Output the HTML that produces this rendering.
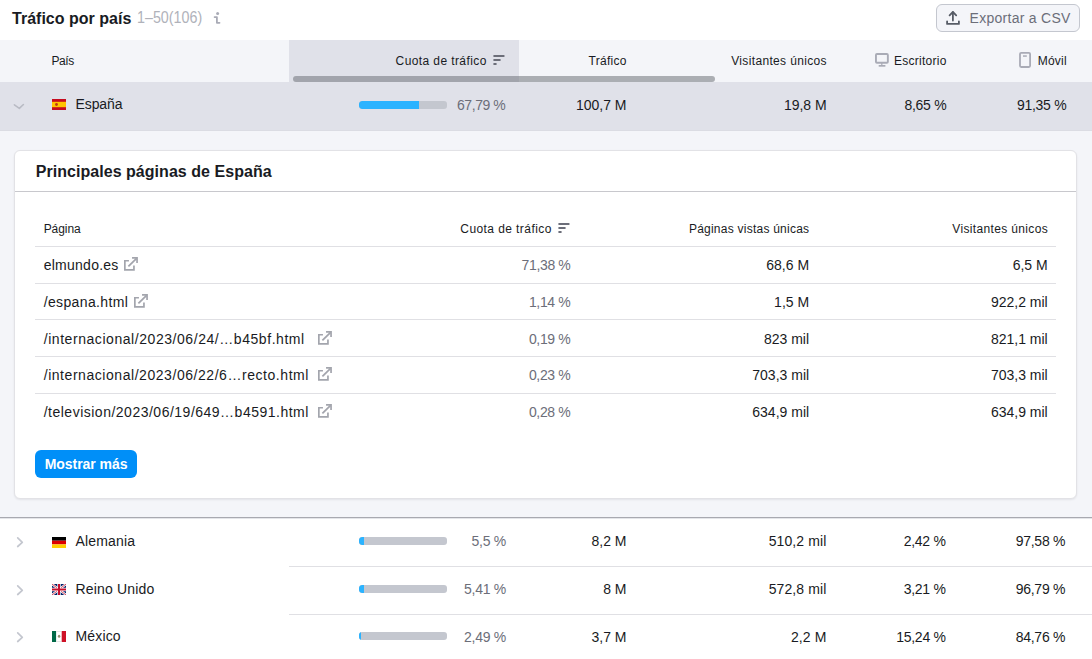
<!DOCTYPE html>
<html><head><meta charset="utf-8"><style>
html,body{margin:0;padding:0;}
body{width:1092px;height:659px;overflow:hidden;position:relative;background:#fff;font-family:"Liberation Sans",sans-serif;}
.t{position:absolute;white-space:nowrap;}
.box{position:absolute;}
.ic{position:absolute;display:block;}
</style></head><body>
<div class="t" style="left:12.00px;top:10.75px;font-size:16px;line-height:16px;letter-spacing:0.017px;color:#191b23;font-weight:700;">Tráfico por país</div>
<div class="t" style="left:136.60px;top:10.25px;font-size:16px;line-height:16px;letter-spacing:0.000px;color:#b0b2ba;-webkit-text-stroke:0;transform:scaleX(0.894);transform-origin:0.00px 0;">1–50(106)</div>
<svg class="ic" style="left:210px;top:8px" width="14" height="20" viewBox="210 8 14 20" fill="none" stroke="#a9abb6" stroke-width="1.8" stroke-linecap="round" stroke-linejoin="round"><circle cx="217.6" cy="13.4" r="1.5" fill="#a9abb6" stroke="none"/><path d="M214.6 17.1H216.9V22.8H219.5"/></svg>
<div class="box" style="left:936px;top:4px;width:142px;height:26px;border:1px solid #c4c7cf;background:#f4f5f9;border-radius:6px"></div>
<svg class="ic" style="left:945px;top:10px" width="16" height="16" viewBox="0 0 16 16" fill="none" stroke="#575c66" stroke-width="1.8" stroke-linecap="round" stroke-linejoin="round"><path d="M2.1 11.3V13.9H13.9V11.3"/><path d="M7.9 10.5V2.1"/><path d="M4.6 5.3L7.9 2.0L11.2 5.3"/></svg>
<div class="t" style="left:969.60px;top:10.95px;font-size:14px;line-height:14px;letter-spacing:0.273px;color:#6c6e79;">Exportar a CSV</div>
<div class="box" style="left:0;top:40px;width:1092px;height:42px;background:#f4f5f9"></div>
<div class="box" style="left:289px;top:40px;width:230px;height:42px;background:#e0e1e9"></div>
<div class="box" style="left:293px;top:76px;width:422px;height:6px;border-radius:3px;background:rgba(112,114,122,0.55)"></div>
<div class="t" style="left:51.50px;top:54.74px;font-size:12px;line-height:12px;letter-spacing:-0.433px;color:#191b23;">País</div>
<div class="t" style="left:395.60px;top:54.74px;font-size:12px;line-height:12px;letter-spacing:0.400px;color:#191b23;">Cuota de tráfico</div>
<svg class="ic" style="left:492px;top:54px" width="14" height="12" viewBox="0 0 14 12" fill="none" stroke="#6c6e79" stroke-width="2" stroke-linecap="round"><path d="M2.2 2H11.7"/><path d="M2.2 6H7.8"/><path d="M2.2 10H3.8"/></svg>
<div class="t" style="left:588.50px;top:54.74px;font-size:12px;line-height:12px;letter-spacing:0.292px;color:#191b23;">Tráfico</div>
<div class="t" style="left:731.20px;top:54.74px;font-size:12px;line-height:12px;letter-spacing:0.347px;color:#191b23;">Visitantes únicos</div>
<svg class="ic" style="left:874px;top:52px" width="16" height="16" viewBox="0 0 16 16" fill="none" stroke="#a9abb6" stroke-width="1.9"><rect x="1.95" y="1.95" width="11.9" height="8.8" rx="1"/><path d="M7.8 11V13" stroke-width="1.2"/><path d="M4.7 13.85H11.4" stroke-width="1.7"/></svg>
<div class="t" style="left:893.90px;top:54.74px;font-size:12px;line-height:12px;letter-spacing:0.267px;color:#191b23;">Escritorio</div>
<svg class="ic" style="left:1017px;top:51px" width="16" height="18" viewBox="0 0 16 18" fill="none" stroke="#a9abb6" stroke-width="1.8"><rect x="3" y="1.9" width="10.1" height="14.1" rx="1.2"/><path d="M6 5.05H9.8" stroke-width="1.5"/></svg>
<div class="t" style="left:1037.70px;top:54.74px;font-size:12px;line-height:12px;letter-spacing:0.225px;color:#191b23;">Móvil</div>
<div class="box" style="left:0;top:82px;width:1092px;height:48px;background:#e0e1e9;border-bottom:1px solid #dbdce3"></div>
<svg class="ic" style="left:11px;top:99px" width="16" height="14" viewBox="0 0 16 14" fill="none" stroke="#b9bbc4" stroke-width="1.6" stroke-linecap="round" stroke-linejoin="round"><path d="M3.4 5.8L8.35 9.3L12.4 5.5"/></svg>
<svg class="ic" style="left:52px;top:99px" width="14" height="11" viewBox="0 0 14 11"><rect width="14" height="11" fill="#c60b1e"/><rect y="2.8" width="14" height="5.4" fill="#ffc400"/><circle cx="4.5" cy="5.5" r="1.4" fill="#ad1519" opacity="0.8"/></svg>
<div class="t" style="left:75.50px;top:97.35px;font-size:14px;line-height:14px;letter-spacing:-0.100px;color:#191b23;">España</div>
<div class="box" style="left:359px;top:101px;width:88px;height:8px;border-radius:3px;background:#c4c7cf;overflow:hidden"><div style="position:absolute;left:0;top:0;height:8px;width:59.66px;background:#2bb3ff;border-radius:3px 0 0 3px"></div></div>
<div class="t" style="left:457.00px;top:98.15px;font-size:14px;line-height:14px;letter-spacing:-0.425px;color:#6c6e79;">67,79 %</div>
<div class="t" style="left:576.00px;top:98.15px;font-size:14px;line-height:14px;letter-spacing:-0.017px;color:#191b23;">100,7 M</div>
<div class="t" style="left:784.00px;top:98.15px;font-size:14px;line-height:14px;letter-spacing:-0.040px;color:#191b23;">19,8 M</div>
<div class="t" style="left:904.50px;top:98.15px;font-size:14px;line-height:14px;letter-spacing:-0.300px;color:#191b23;">8,65 %</div>
<div class="t" style="left:1017.05px;top:98.15px;font-size:14px;line-height:14px;letter-spacing:-0.300px;color:#191b23;">91,35 %</div>
<div class="box" style="left:0;top:131px;width:1092px;height:386px;background:#f4f5f9;border-bottom:1px solid #a8a9b0;box-shadow:0 1px 0 #e4e5e9"></div>
<div class="box" style="left:14px;top:150px;width:1061px;height:346.5px;background:#fff;border:1px solid #e2e2e6;border-radius:6px;box-shadow:0 1px 2px rgba(25,27,35,0.08)"></div>
<div class="box" style="left:15px;top:191px;width:1061px;height:1px;background:#c8c8cd"></div>
<div class="t" style="left:35.80px;top:164.25px;font-size:16px;line-height:16px;letter-spacing:0.037px;color:#191b23;font-weight:700;">Principales páginas de España</div>
<div class="t" style="left:43.70px;top:223.04px;font-size:12px;line-height:12px;letter-spacing:-0.080px;color:#191b23;">Página</div>
<div class="t" style="left:460.30px;top:223.04px;font-size:12px;line-height:12px;letter-spacing:0.420px;color:#191b23;">Cuota de tráfico</div>
<svg class="ic" style="left:557px;top:222px" width="14" height="12" viewBox="0 0 14 12" fill="none" stroke="#6c6e79" stroke-width="2" stroke-linecap="round"><path d="M2.2 2H11.7"/><path d="M2.2 6H7.8"/><path d="M2.2 10H3.8"/></svg>
<div class="t" style="left:688.90px;top:223.04px;font-size:12px;line-height:12px;letter-spacing:0.240px;color:#191b23;">Páginas vistas únicas</div>
<div class="t" style="left:952.30px;top:223.04px;font-size:12px;line-height:12px;letter-spacing:0.347px;color:#191b23;">Visitantes únicos</div>
<div class="box" style="left:35px;top:246px;width:1021px;height:1px;background:#e0e0e4"></div>
<div class="box" style="left:35px;top:283px;width:1021px;height:1px;background:#e0e0e4"></div>
<div class="box" style="left:35px;top:319px;width:1021px;height:1px;background:#e0e0e4"></div>
<div class="box" style="left:35px;top:356px;width:1021px;height:1px;background:#e0e0e4"></div>
<div class="box" style="left:35px;top:393px;width:1021px;height:1px;background:#e0e0e4"></div>
<div class="t" style="left:43.70px;top:258.15px;font-size:14px;line-height:14px;letter-spacing:0.256px;color:#191b23;">elmundo.es</div>
<svg class="ic" style="left:124px;top:257.0px" width="14" height="14" viewBox="0 0 14 14" fill="none" stroke="#a3a5ad" stroke-width="1.7" stroke-linecap="square"><path d="M4.1 3.75H0.85V12.85H9.95V9.4"/><path d="M8.9 0.85H13.05V5.1"/><path d="M12.6 1.4L4.4 9.4" stroke-width="1.8" stroke-linecap="butt"/></svg>
<div class="t" style="left:521.55px;top:258.15px;font-size:14px;line-height:14px;letter-spacing:-0.350px;color:#6c6e79;">71,38 %</div>
<div class="t" style="left:766.30px;top:258.15px;font-size:14px;line-height:14px;letter-spacing:0.000px;color:#191b23;">68,6 M</div>
<div class="t" style="left:1012.70px;top:258.15px;font-size:14px;line-height:14px;letter-spacing:0.000px;color:#191b23;">6,5 M</div>
<div class="t" style="left:43.70px;top:295.15px;font-size:14px;line-height:14px;letter-spacing:0.368px;color:#191b23;">/espana.html</div>
<svg class="ic" style="left:134px;top:294.0px" width="14" height="14" viewBox="0 0 14 14" fill="none" stroke="#a3a5ad" stroke-width="1.7" stroke-linecap="square"><path d="M4.1 3.75H0.85V12.85H9.95V9.4"/><path d="M8.9 0.85H13.05V5.1"/><path d="M12.6 1.4L4.4 9.4" stroke-width="1.8" stroke-linecap="butt"/></svg>
<div class="t" style="left:528.95px;top:295.15px;font-size:14px;line-height:14px;letter-spacing:-0.350px;color:#6c6e79;">1,14 %</div>
<div class="t" style="left:774.10px;top:295.15px;font-size:14px;line-height:14px;letter-spacing:0.000px;color:#191b23;">1,5 M</div>
<div class="t" style="left:990.90px;top:295.15px;font-size:14px;line-height:14px;letter-spacing:0.000px;color:#191b23;">922,2 mil</div>
<div class="t" style="left:43.70px;top:331.65px;font-size:14px;line-height:14px;letter-spacing:0.556px;color:#191b23;">/internacional/2023/06/24/…b45bf.html</div>
<svg class="ic" style="left:318px;top:330.5px" width="14" height="14" viewBox="0 0 14 14" fill="none" stroke="#a3a5ad" stroke-width="1.7" stroke-linecap="square"><path d="M4.1 3.75H0.85V12.85H9.95V9.4"/><path d="M8.9 0.85H13.05V5.1"/><path d="M12.6 1.4L4.4 9.4" stroke-width="1.8" stroke-linecap="butt"/></svg>
<div class="t" style="left:528.95px;top:331.65px;font-size:14px;line-height:14px;letter-spacing:-0.350px;color:#6c6e79;">0,19 %</div>
<div class="t" style="left:763.95px;top:331.65px;font-size:14px;line-height:14px;letter-spacing:0.000px;color:#191b23;">823 mil</div>
<div class="t" style="left:990.90px;top:331.65px;font-size:14px;line-height:14px;letter-spacing:0.000px;color:#191b23;">821,1 mil</div>
<div class="t" style="left:43.70px;top:368.35px;font-size:14px;line-height:14px;letter-spacing:0.550px;color:#191b23;">/internacional/2023/06/22/6…recto.html</div>
<svg class="ic" style="left:318px;top:367.2px" width="14" height="14" viewBox="0 0 14 14" fill="none" stroke="#a3a5ad" stroke-width="1.7" stroke-linecap="square"><path d="M4.1 3.75H0.85V12.85H9.95V9.4"/><path d="M8.9 0.85H13.05V5.1"/><path d="M12.6 1.4L4.4 9.4" stroke-width="1.8" stroke-linecap="butt"/></svg>
<div class="t" style="left:528.95px;top:368.35px;font-size:14px;line-height:14px;letter-spacing:-0.350px;color:#6c6e79;">0,23 %</div>
<div class="t" style="left:752.30px;top:368.35px;font-size:14px;line-height:14px;letter-spacing:0.000px;color:#191b23;">703,3 mil</div>
<div class="t" style="left:990.90px;top:368.35px;font-size:14px;line-height:14px;letter-spacing:0.000px;color:#191b23;">703,3 mil</div>
<div class="t" style="left:43.70px;top:405.15px;font-size:14px;line-height:14px;letter-spacing:0.499px;color:#191b23;">/television/2023/06/19/649…b4591.html</div>
<svg class="ic" style="left:318px;top:404.0px" width="14" height="14" viewBox="0 0 14 14" fill="none" stroke="#a3a5ad" stroke-width="1.7" stroke-linecap="square"><path d="M4.1 3.75H0.85V12.85H9.95V9.4"/><path d="M8.9 0.85H13.05V5.1"/><path d="M12.6 1.4L4.4 9.4" stroke-width="1.8" stroke-linecap="butt"/></svg>
<div class="t" style="left:528.95px;top:405.15px;font-size:14px;line-height:14px;letter-spacing:-0.350px;color:#6c6e79;">0,28 %</div>
<div class="t" style="left:752.30px;top:405.15px;font-size:14px;line-height:14px;letter-spacing:0.000px;color:#191b23;">634,9 mil</div>
<div class="t" style="left:990.90px;top:405.15px;font-size:14px;line-height:14px;letter-spacing:0.000px;color:#191b23;">634,9 mil</div>
<div class="box" style="left:35px;top:450.3px;width:102px;height:27.5px;background:#008ff8;border-radius:6px"></div>
<div class="t" style="left:44.70px;top:457.05px;font-size:14px;line-height:14px;letter-spacing:-0.045px;color:#fff;font-weight:700;">Mostrar más</div>
<div class="box" style="left:289px;top:565.5px;width:803px;height:1px;background:#e0e0e4"></div>
<div class="box" style="left:289px;top:613.5px;width:803px;height:1px;background:#e0e0e4"></div>
<svg class="ic" style="left:13px;top:534.5px" width="14" height="14" viewBox="0 0 14 14" fill="none" stroke="#c4c7cf" stroke-width="1.7" stroke-linecap="round" stroke-linejoin="round"><path d="M4.7 2.8L9.3 7.3L4.7 11.5"/></svg>
<svg class="ic" style="left:52px;top:537px" width="14" height="11" viewBox="0 0 14 11"><rect width="14" height="3.7" fill="#000"/><rect y="3.7" width="14" height="3.7" fill="#dd0000"/><rect y="7.4" width="14" height="3.6" fill="#ffce00"/></svg>
<div class="t" style="left:75.40px;top:534.15px;font-size:14px;line-height:14px;letter-spacing:0.180px;color:#191b23;">Alemania</div>
<div class="box" style="left:359px;top:537px;width:88px;height:8px;border-radius:3px;background:#c4c7cf;overflow:hidden"><div style="position:absolute;left:0;top:0;height:8px;width:4.84px;background:#2bb3ff;border-radius:3px 0 0 3px"></div></div>
<div class="t" style="left:471.60px;top:534.15px;font-size:14px;line-height:14px;letter-spacing:-0.300px;color:#6c6e79;">5,5 %</div>
<div class="t" style="left:591.50px;top:534.15px;font-size:14px;line-height:14px;letter-spacing:0.000px;color:#191b23;">8,2 M</div>
<div class="t" style="left:768.70px;top:534.15px;font-size:14px;line-height:14px;letter-spacing:0.100px;color:#191b23;">510,2 mil</div>
<div class="t" style="left:903.65px;top:534.15px;font-size:14px;line-height:14px;letter-spacing:-0.250px;color:#191b23;">2,42 %</div>
<div class="t" style="left:1015.65px;top:534.15px;font-size:14px;line-height:14px;letter-spacing:-0.250px;color:#191b23;">97,58 %</div>
<svg class="ic" style="left:13px;top:582.5px" width="14" height="14" viewBox="0 0 14 14" fill="none" stroke="#c4c7cf" stroke-width="1.7" stroke-linecap="round" stroke-linejoin="round"><path d="M4.7 2.8L9.3 7.3L4.7 11.5"/></svg>
<svg class="ic" style="left:52px;top:584px" width="14" height="11" viewBox="0 0 14 11"><rect width="14" height="11" fill="#012169"/><path d="M0 0L14 11M14 0L0 11" stroke="#fff" stroke-width="2.2"/><path d="M0 0L14 11M14 0L0 11" stroke="#c8102e" stroke-width="0.8"/><path d="M7 0V11M0 5.5H14" stroke="#fff" stroke-width="3.4"/><path d="M7 0V11M0 5.5H14" stroke="#c8102e" stroke-width="2"/></svg>
<div class="t" style="left:75.40px;top:582.15px;font-size:14px;line-height:14px;letter-spacing:0.180px;color:#191b23;">Reino Unido</div>
<div class="box" style="left:359px;top:585px;width:88px;height:8px;border-radius:3px;background:#c4c7cf;overflow:hidden"><div style="position:absolute;left:0;top:0;height:8px;width:4.76px;background:#2bb3ff;border-radius:3px 0 0 3px"></div></div>
<div class="t" style="left:464.10px;top:582.15px;font-size:14px;line-height:14px;letter-spacing:-0.300px;color:#6c6e79;">5,41 %</div>
<div class="t" style="left:603.15px;top:582.15px;font-size:14px;line-height:14px;letter-spacing:0.000px;color:#191b23;">8 M</div>
<div class="t" style="left:768.70px;top:582.15px;font-size:14px;line-height:14px;letter-spacing:0.100px;color:#191b23;">572,8 mil</div>
<div class="t" style="left:903.65px;top:582.15px;font-size:14px;line-height:14px;letter-spacing:-0.250px;color:#191b23;">3,21 %</div>
<div class="t" style="left:1015.65px;top:582.15px;font-size:14px;line-height:14px;letter-spacing:-0.250px;color:#191b23;">96,79 %</div>
<svg class="ic" style="left:13px;top:629.5px" width="14" height="14" viewBox="0 0 14 14" fill="none" stroke="#c4c7cf" stroke-width="1.7" stroke-linecap="round" stroke-linejoin="round"><path d="M4.7 2.8L9.3 7.3L4.7 11.5"/></svg>
<svg class="ic" style="left:52px;top:631px" width="14" height="11" viewBox="0 0 14 11"><rect width="4.3" height="11" fill="#006847"/><rect x="4.3" width="5.4" height="11" fill="#fff"/><rect x="9.7" width="4.3" height="11" fill="#ce1126"/><path d="M4.3 0.3H9.7M4.3 10.7H9.7" stroke="#c9cbc9" stroke-width="0.6"/><ellipse cx="7.1" cy="5.3" rx="1.2" ry="1.5" fill="#6b6a3e" opacity="0.75"/></svg>
<div class="t" style="left:75.40px;top:629.15px;font-size:14px;line-height:14px;letter-spacing:0.180px;color:#191b23;">México</div>
<div class="box" style="left:359px;top:632px;width:88px;height:8px;border-radius:3px;background:#c4c7cf;overflow:hidden"><div style="position:absolute;left:0;top:0;height:8px;width:2.19px;background:#2bb3ff;border-radius:3px 0 0 3px"></div></div>
<div class="t" style="left:464.10px;top:630.15px;font-size:14px;line-height:14px;letter-spacing:-0.300px;color:#6c6e79;">2,49 %</div>
<div class="t" style="left:591.50px;top:630.15px;font-size:14px;line-height:14px;letter-spacing:0.000px;color:#191b23;">3,7 M</div>
<div class="t" style="left:790.90px;top:630.15px;font-size:14px;line-height:14px;letter-spacing:0.100px;color:#191b23;">2,2 M</div>
<div class="t" style="left:896.15px;top:630.15px;font-size:14px;line-height:14px;letter-spacing:-0.250px;color:#191b23;">15,24 %</div>
<div class="t" style="left:1015.65px;top:630.15px;font-size:14px;line-height:14px;letter-spacing:-0.250px;color:#191b23;">84,76 %</div>
</body></html>
